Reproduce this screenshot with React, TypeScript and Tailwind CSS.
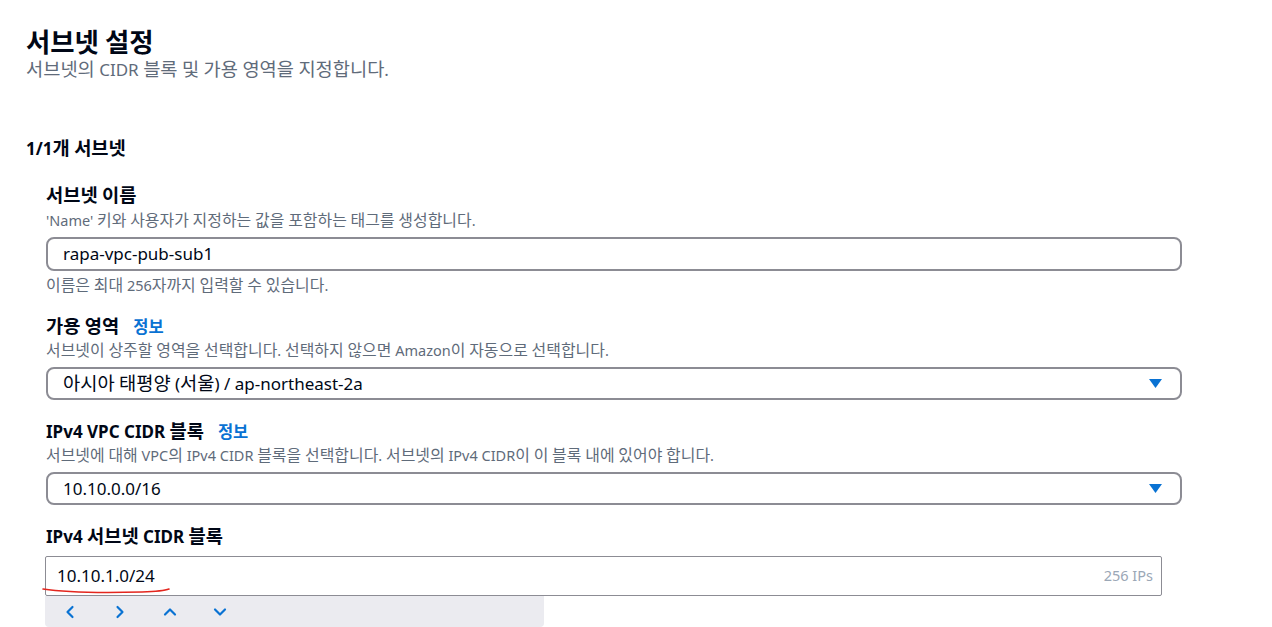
import { ChevronDown, ChevronLeft, ChevronRight, ChevronUp } from "lucide-react";

const font = { fontFamily: '"Noto Sans", "Noto Sans CJK KR", sans-serif' };

// Hangul runs are drawn a little wider than the Latin text around them
function K({ t }: { t: string }) {
  const parts = t.split(/([\uAC00-\uD7A3\u3131-\u318E]+)/);
  return (
    <>
      {parts.map((p, i) =>
        i % 2 === 1 ? (
          <span key={i} className="text-[1.1em] leading-[0]">
            {p}
          </span>
        ) : (
          p
        )
      )}
    </>
  );
}

function Label({ text, info }: { text: string; info?: boolean }) {
  return (
    <div className="flex items-center h-[24px] text-[17px] leading-[24px] font-bold text-[#000716]">
      <span>
        <K t={text} />
      </span>
      {info && (
        <span className="ml-[14px] text-[15px] font-semibold text-[#0972d3]">
          <K t="정보" />
        </span>
      )}
    </div>
  );
}

function Desc({ text }: { text: string }) {
  return (
    <div className="h-[20px] text-[14.5px] leading-[20px] text-[#5f6b7a]">
      <K t={text} />
    </div>
  );
}

function SelectBox({ value }: { value: string }) {
  return (
    <div className="mt-[7px] flex items-center justify-between w-[1136px] h-[33px] border-2 border-[#8c8c94] rounded-[8px] pl-[15px] pr-[18px]">
      <span className="text-[17px] leading-[24px] text-[#000716]">
        <K t={value} />
      </span>
      <svg width="13" height="9" viewBox="0 0 13 9">
        <path d="M0 0 L13 0 L6.5 9 Z" fill="#0972d3" />
      </svg>
    </div>
  );
}

export default function App() {
  return (
    <div className="w-[1272px] h-[627px] overflow-hidden bg-white" style={font}>
      <div className="pl-[26px] pt-[28px]">
        <h1 className="h-[30px] text-[24px] leading-[30px] font-bold text-[#000716]">
          <K t="서브넷 설정" />
        </h1>
        <p className="mt-[1px] h-[22px] text-[17px] leading-[22px] text-[#5f6b7a]">
          <K t="서브넷의 CIDR 블록 및 가용 영역을 지정합니다." />
        </p>
        <h2 className="mt-[56px] h-[24px] text-[17px] leading-[24px] font-bold text-[#000716]">
          <K t="1/1개 서브넷" />
        </h2>

        <div className="pl-[20px] mt-[23px]">
          <Label text="서브넷 이름" />
          <div className="mt-[2px]">
            <Desc text="'Name' 키와 사용자가 지정하는 값을 포함하는 태그를 생성합니다." />
          </div>
          <div className="mt-[7px] flex items-center w-[1136px] h-[34px] border-2 border-[#8c8c94] rounded-[8px] pl-[15px]">
            <span className="text-[17px] text-[#000716]">rapa-vpc-pub-sub1</span>
          </div>
          <div className="mt-[4px]">
            <Desc text="이름은 최대 256자까지 입력할 수 있습니다." />
          </div>

          <div className="mt-[20px]">
            <Label text="가용 영역" info />
          </div>
          <div className="mt-[1px]">
            <Desc text="서브넷이 상주할 영역을 선택합니다. 선택하지 않으면 Amazon이 자동으로 선택합니다." />
          </div>
          <SelectBox value="아시아 태평양 (서울) / ap-northeast-2a" />

          <div className="mt-[20px]">
            <Label text="IPv4 VPC CIDR 블록" info />
          </div>
          <div className="mt-[1px]">
            <Desc text="서브넷에 대해 VPC의 IPv4 CIDR 블록을 선택합니다. 서브넷의 IPv4 CIDR이 이 블록 내에 있어야 합니다." />
          </div>
          <SelectBox value="10.10.0.0/16" />

          <div className="mt-[20px]">
            <Label text="IPv4 서브넷 CIDR 블록" />
          </div>
          <div className="-ml-[1px] mt-[7px]">
            <div className="relative flex items-center justify-between w-[1117px] h-[40px] border border-[#8c8c94] rounded-[2px] pl-[11px] pr-[8px]">
              <span className="text-[17px] text-[#000716]">10.10.1.0/24</span>
              <span className="text-[14.5px] text-[#9ba7b6]">256 IPs</span>
              <svg
                className="absolute left-[-4px] top-[30px]"
                width="130"
                height="8"
                viewBox="0 0 130 8"
              >
                <path
                  d="M1 2 C 20 5, 60 6, 100 5 C 115 4.5, 122 4, 127 2"
                  stroke="#e3261e"
                  strokeWidth="1.6"
                  fill="none"
                  strokeLinecap="round"
                />
              </svg>
            </div>
            <div className="flex items-center w-[499px] h-[31px] bg-[#ebebf0] rounded-b-[4px] text-[#0972d3]">
              <ChevronLeft size={20} strokeWidth={2.6} className="ml-[15px]" />
              <ChevronRight size={20} strokeWidth={2.6} className="ml-[30px]" />
              <ChevronUp size={20} strokeWidth={2.6} className="ml-[30px]" />
              <ChevronDown size={20} strokeWidth={2.6} className="ml-[30px]" />
            </div>
          </div>
        </div>
      </div>
    </div>
  );
}
